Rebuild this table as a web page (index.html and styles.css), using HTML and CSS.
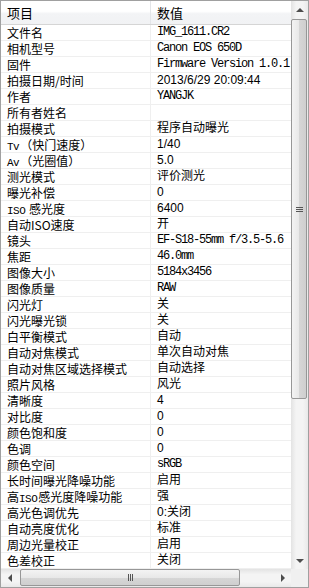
FILE: index.html
```html
<!DOCTYPE html>
<html lang="zh-CN">
<head>
  <meta charset="UTF-8">
  <title>照片属性</title>
  <link rel="stylesheet" href="styles.css">
</head>
<body>
  <div class="listview">
    <div class="main">
      <div class="table">
        <div class="head">
          <div class="hcell key">项目</div>
          <div class="hcell">数值</div>
        </div>
        <div class="row"><div class="key">文件名</div><div class="val lat">IMG_1611.CR2</div></div>
        <div class="row"><div class="key">相机型号</div><div class="val lat">Canon EOS 650D</div></div>
        <div class="row"><div class="key">固件</div><div class="val lat">Firmware Version 1.0.1</div></div>
        <div class="row"><div class="key">拍摄日期/时间</div><div class="val">2013/6/29 20:09:44</div></div>
        <div class="row"><div class="key">作者</div><div class="val lat">YANGJK</div></div>
        <div class="row"><div class="key">所有者姓名</div><div class="val"></div></div>
        <div class="row"><div class="key">拍摄模式</div><div class="val">程序自动曝光</div></div>
        <div class="row"><div class="key"><span class="lat">Tv</span>（快门速度）</div><div class="val">1/40</div></div>
        <div class="row"><div class="key"><span class="lat">Av</span>（光圈值）</div><div class="val">5.0</div></div>
        <div class="row"><div class="key">测光模式</div><div class="val">评价测光</div></div>
        <div class="row"><div class="key">曝光补偿</div><div class="val">0</div></div>
        <div class="row"><div class="key"><span class="lat">ISO</span> 感光度</div><div class="val">6400</div></div>
        <div class="row"><div class="key">自动ISO速度</div><div class="val">开</div></div>
        <div class="row"><div class="key">镜头</div><div class="val lat">EF-S18-55mm f/3.5-5.6</div></div>
        <div class="row"><div class="key">焦距</div><div class="val lat">46.0mm</div></div>
        <div class="row"><div class="key">图像大小</div><div class="val lat">5184x3456</div></div>
        <div class="row"><div class="key">图像质量</div><div class="val lat">RAW</div></div>
        <div class="row"><div class="key">闪光灯</div><div class="val">关</div></div>
        <div class="row"><div class="key">闪光曝光锁</div><div class="val">关</div></div>
        <div class="row"><div class="key">白平衡模式</div><div class="val">自动</div></div>
        <div class="row"><div class="key">自动对焦模式</div><div class="val">单次自动对焦</div></div>
        <div class="row"><div class="key">自动对焦区域选择模式</div><div class="val">自动选择</div></div>
        <div class="row"><div class="key">照片风格</div><div class="val">风光</div></div>
        <div class="row"><div class="key">清晰度</div><div class="val">4</div></div>
        <div class="row"><div class="key">对比度</div><div class="val">0</div></div>
        <div class="row"><div class="key">颜色饱和度</div><div class="val">0</div></div>
        <div class="row"><div class="key">色调</div><div class="val">0</div></div>
        <div class="row"><div class="key">颜色空间</div><div class="val lat">sRGB</div></div>
        <div class="row"><div class="key">长时间曝光降噪功能</div><div class="val">启用</div></div>
        <div class="row"><div class="key">高<span class="lat">ISO</span>感光度降噪功能</div><div class="val">强</div></div>
        <div class="row"><div class="key">高光色调优先</div><div class="val">0:关闭</div></div>
        <div class="row"><div class="key">自动亮度优化</div><div class="val">标准</div></div>
        <div class="row"><div class="key">周边光量校正</div><div class="val">启用</div></div>
        <div class="row"><div class="key">色差校正</div><div class="val">关闭</div></div>
      </div>

      <!-- vertical scrollbar -->
      <div class="vscroll">
        <div class="btn"><span class="arrow up"></span></div>
        <div class="track">
          <div class="thumb v"><span class="grip"></span></div>
        </div>
        <div class="btn"><span class="arrow down"></span></div>
      </div>
    </div>

    <!-- horizontal scrollbar + corner -->
    <div class="hbar">
      <div class="hscroll">
        <div class="btn"><span class="arrow left"></span></div>
        <div class="track">
          <div class="thumb h"><span class="grip"></span></div>
        </div>
        <div class="btn"><span class="arrow right"></span></div>
      </div>
      <div class="corner"></div>
    </div>
  </div>
</body>
</html>
```

FILE: styles.css
```css
body {
  margin: 0;
  background: #fff;
}
.listview {
  width: 309px;
  height: 588px;
  box-sizing: border-box;
  border: 1px solid #a0a0a0;
  display: flex;
  flex-direction: column;
  font-family: "Noto Sans CJK SC", "Liberation Sans", sans-serif;
  font-size: 12px;
  color: #000;
  overflow: hidden;
}
.main {
  display: flex;
  height: 568px;
}
.table {
  width: 290px;
  overflow: hidden;
}
.head {
  display: flex;
  height: 24px;
  box-sizing: border-box;
  border-bottom: 1px solid #d5d5d5;
  background: linear-gradient(#ffffff, #ffffff 45%, #f3f4f6 55%, #f1f2f4);
}
.hcell {
  flex: 1;
  padding-left: 6px;
  font-size: 13px;
  line-height: 23px;
}
.hcell.key {
  border-right: 1px solid #e3e5e8;
}
.row {
  display: flex;
  height: 16px;
  box-sizing: border-box;
  border-bottom: 1px solid #efefef;
  line-height: 15px;
  white-space: nowrap;
}
.key {
  flex: none;
  width: 150px;
  box-sizing: border-box;
  padding-left: 6px;
  border-right: 1px solid #efefef;
  overflow: hidden;
}
.val {
  padding-left: 6px;
  font-family: "Liberation Sans", "Noto Sans CJK SC", sans-serif;
}
/* latin runs drawn in a narrow fixed-pitch face */
.lat {
  font-family: "Liberation Mono", "Noto Sans CJK SC", monospace;
  font-size: 12px;
  line-height: 15px;
  letter-spacing: -1.2px;
}
.key .lat {
  font-size: 11px;
  line-height: 10px;
  letter-spacing: -0.5px;
  margin-right: 1px;
}

/* scrollbars */
.vscroll {
  width: 17px;
  display: flex;
  flex-direction: column;
  background: linear-gradient(90deg, #e3e3e3, #f4f4f4 30%, #f4f4f4 70%, #e9e9e9);
}
.btn {
  flex: none;
  width: 17px;
  height: 17px;
  display: flex;
  align-items: center;
  justify-content: center;
}
.track {
  flex: 1;
  position: relative;
}
.thumb {
  position: absolute;
  box-sizing: border-box;
  border: 1px solid #979797;
  border-radius: 2px;
  display: flex;
  align-items: center;
  justify-content: center;
}
.thumb.v {
  left: 0;
  right: 1px;
  top: 1px;
  height: 380px;
  background: linear-gradient(90deg, #f3f3f3, #e8e8e8 50%, #d6d6d6 51%, #cfcfcf);
}
.thumb.h {
  top: 0;
  bottom: 1px;
  left: 2px;
  width: 220px;
  background: linear-gradient(#f3f3f3, #e8e8e8 50%, #d6d6d6 51%, #cfcfcf);
}
.grip {
  width: 7px;
  height: 5px;
  background: repeating-linear-gradient(#555 0 1px, transparent 1px 2px);
}
.thumb.h .grip {
  background: repeating-linear-gradient(90deg, #555 0 1px, transparent 1px 2px);
  width: 5px;
  height: 7px;
}
.arrow {
  width: 0;
  height: 0;
  border: 4px solid transparent;
}
.arrow.up {
  border-bottom-color: #4d4d4d;
  border-top-width: 0;
}
.arrow.down {
  border-top-color: #4d4d4d;
  border-bottom-width: 0;
}
.arrow.left {
  border-right-color: #4d4d4d;
  border-left-width: 0;
}
.arrow.right {
  border-left-color: #4d4d4d;
  border-right-width: 0;
}
.hbar {
  display: flex;
  height: 18px;
}
.hscroll {
  width: 290px;
  display: flex;
  background: linear-gradient(#e3e3e3, #f4f4f4 30%, #f4f4f4 70%, #e9e9e9);
}
.hscroll .track {
  flex: 1;
}
.corner {
  flex: 1;
  background: #f0f0f0;
}
```
